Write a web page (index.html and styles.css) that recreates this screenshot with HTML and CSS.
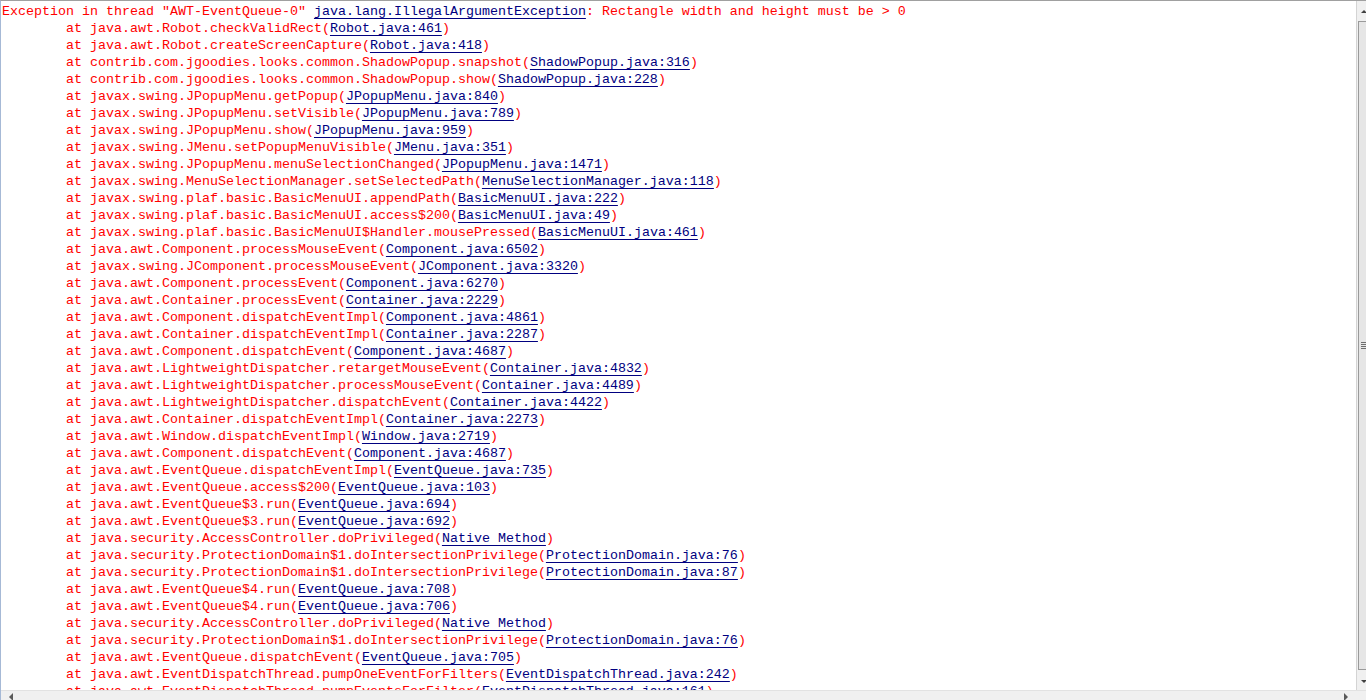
FILE: index.html
```html
<!DOCTYPE html>
<html>
<head>
<meta charset="utf-8">
<link rel="stylesheet" href="styles.css">
</head>
<body>
<div class="window">
<div class="console"><pre class="log">Exception in thread "AWT-EventQueue-0" <span class="ln">java.lang.IllegalArgumentException</span>: Rectangle width and height must be &gt; 0
	at java.awt.Robot.checkValidRect(<span class="ln">Robot.java:461</span>)
	at java.awt.Robot.createScreenCapture(<span class="ln">Robot.java:418</span>)
	at contrib.com.jgoodies.looks.common.ShadowPopup.snapshot(<span class="ln">ShadowPopup.java:316</span>)
	at contrib.com.jgoodies.looks.common.ShadowPopup.show(<span class="ln">ShadowPopup.java:228</span>)
	at javax.swing.JPopupMenu.getPopup(<span class="ln">JPopupMenu.java:840</span>)
	at javax.swing.JPopupMenu.setVisible(<span class="ln">JPopupMenu.java:789</span>)
	at javax.swing.JPopupMenu.show(<span class="ln">JPopupMenu.java:959</span>)
	at javax.swing.JMenu.setPopupMenuVisible(<span class="ln">JMenu.java:351</span>)
	at javax.swing.JPopupMenu.menuSelectionChanged(<span class="ln">JPopupMenu.java:1471</span>)
	at javax.swing.MenuSelectionManager.setSelectedPath(<span class="ln">MenuSelectionManager.java:118</span>)
	at javax.swing.plaf.basic.BasicMenuUI.appendPath(<span class="ln">BasicMenuUI.java:222</span>)
	at javax.swing.plaf.basic.BasicMenuUI.access$200(<span class="ln">BasicMenuUI.java:49</span>)
	at javax.swing.plaf.basic.BasicMenuUI$Handler.mousePressed(<span class="ln">BasicMenuUI.java:461</span>)
	at java.awt.Component.processMouseEvent(<span class="ln">Component.java:6502</span>)
	at javax.swing.JComponent.processMouseEvent(<span class="ln">JComponent.java:3320</span>)
	at java.awt.Component.processEvent(<span class="ln">Component.java:6270</span>)
	at java.awt.Container.processEvent(<span class="ln">Container.java:2229</span>)
	at java.awt.Component.dispatchEventImpl(<span class="ln">Component.java:4861</span>)
	at java.awt.Container.dispatchEventImpl(<span class="ln">Container.java:2287</span>)
	at java.awt.Component.dispatchEvent(<span class="ln">Component.java:4687</span>)
	at java.awt.LightweightDispatcher.retargetMouseEvent(<span class="ln">Container.java:4832</span>)
	at java.awt.LightweightDispatcher.processMouseEvent(<span class="ln">Container.java:4489</span>)
	at java.awt.LightweightDispatcher.dispatchEvent(<span class="ln">Container.java:4422</span>)
	at java.awt.Container.dispatchEventImpl(<span class="ln">Container.java:2273</span>)
	at java.awt.Window.dispatchEventImpl(<span class="ln">Window.java:2719</span>)
	at java.awt.Component.dispatchEvent(<span class="ln">Component.java:4687</span>)
	at java.awt.EventQueue.dispatchEventImpl(<span class="ln">EventQueue.java:735</span>)
	at java.awt.EventQueue.access$200(<span class="ln">EventQueue.java:103</span>)
	at java.awt.EventQueue$3.run(<span class="ln">EventQueue.java:694</span>)
	at java.awt.EventQueue$3.run(<span class="ln">EventQueue.java:692</span>)
	at java.security.AccessController.doPrivileged(<span class="ln">Native Method</span>)
	at java.security.ProtectionDomain$1.doIntersectionPrivilege(<span class="ln">ProtectionDomain.java:76</span>)
	at java.security.ProtectionDomain$1.doIntersectionPrivilege(<span class="ln">ProtectionDomain.java:87</span>)
	at java.awt.EventQueue$4.run(<span class="ln">EventQueue.java:708</span>)
	at java.awt.EventQueue$4.run(<span class="ln">EventQueue.java:706</span>)
	at java.security.AccessController.doPrivileged(<span class="ln">Native Method</span>)
	at java.security.ProtectionDomain$1.doIntersectionPrivilege(<span class="ln">ProtectionDomain.java:76</span>)
	at java.awt.EventQueue.dispatchEvent(<span class="ln">EventQueue.java:705</span>)
	at java.awt.EventDispatchThread.pumpOneEventForFilters(<span class="ln">EventDispatchThread.java:242</span>)
	at java.awt.EventDispatchThread.pumpEventsForFilter(<span class="ln">EventDispatchThread.java:161</span>)
	at java.awt.EventDispatchThread.pumpEvents(<span class="ln">EventDispatchThread.java:149</span>)</pre></div>
<div class="vscroll">
<div class="arrow-up"></div>
<div class="thumb"><div class="grip"></div></div>
<div class="arrow-down"></div>
</div>
<div class="hscroll">
<div class="arrow-left"></div>
<div class="htrack"></div>
<div class="arrow-right"></div>
</div>
<div class="corner"></div>
</div>
</body>
</html>
```

FILE: styles.css
```css
html, body {
  margin: 0;
  padding: 0;
  background: #ffffff;
  overflow: hidden;
}

.window {
  display: grid;
  grid-template-columns: 1fr 9px;
  grid-template-rows: 689px 10px;
  height: 700px;
  border-top: 1px solid #a0a0a0;
  border-left: 1px solid #a6b9d6;
  box-sizing: border-box;
  overflow: hidden;
}

.console {
  overflow: hidden;
  background: #ffffff;
  border-right: 1px solid #d4d4d4;
}

.log {
  margin: 0;
  padding: 2px 0 0 1px;
  font-family: "Liberation Mono", "Courier New", monospace;
  font-size: 13.333px;
  line-height: 17px;
  color: #ff0000;
  tab-size: 8;
  white-space: pre;
}

.ln {
  color: #000080;
  text-decoration: underline;
  text-decoration-color: #000080;
  text-underline-offset: 3px;
  text-decoration-thickness: 1px;
}

.vscroll {
  display: flex;
  flex-direction: column;
  background: #f0f0f0;
}

.arrow-up {
  height: 19px;
  position: relative;
}

.arrow-up::after {
  content: "";
  position: absolute;
  left: 4px;
  top: 9px;
  border-left: 3px solid transparent;
  border-right: 3px solid transparent;
  border-bottom: 3px solid #404040;
}

.thumb {
  flex: 1;
  margin: 1px 0 8px 1px;
  background: #e6e6e6;
  border-left: 1px solid #9a9a9a;
  border-top: 1px solid #9a9a9a;
  border-bottom: 1px solid #9a9a9a;
  display: flex;
  align-items: center;
}

.grip {
  width: 6px;
  height: 7px;
  margin-left: 2px;
  background: repeating-linear-gradient(to bottom, #6e6e6e 0, #6e6e6e 1px, #e6e6e6 1px, #e6e6e6 2px);
}

.arrow-down {
  height: 12px;
  position: relative;
}

.arrow-down::after {
  content: "";
  position: absolute;
  left: 4px;
  top: 2px;
  border-left: 3px solid transparent;
  border-right: 3px solid transparent;
  border-top: 3px solid #404040;
}

.hscroll {
  display: flex;
  background: #f0f0f0;
  border-top: 1px solid #e2e2e2;
}

.arrow-left {
  width: 17px;
  position: relative;
}

.arrow-left::after {
  content: "";
  position: absolute;
  left: 8px;
  top: 2px;
  border-top: 4px solid transparent;
  border-bottom: 4px solid transparent;
  border-right: 4px solid #5a5a5a;
}

.htrack {
  flex: 1;
}

.arrow-right {
  width: 17px;
  position: relative;
}

.arrow-right::after {
  content: "";
  position: absolute;
  left: 4px;
  top: 2px;
  border-top: 4px solid transparent;
  border-bottom: 4px solid transparent;
  border-left: 4px solid #5a5a5a;
}

.corner {
  background: #f0f0f0;
  border-top: 1px solid #e2e2e2;
}
```
